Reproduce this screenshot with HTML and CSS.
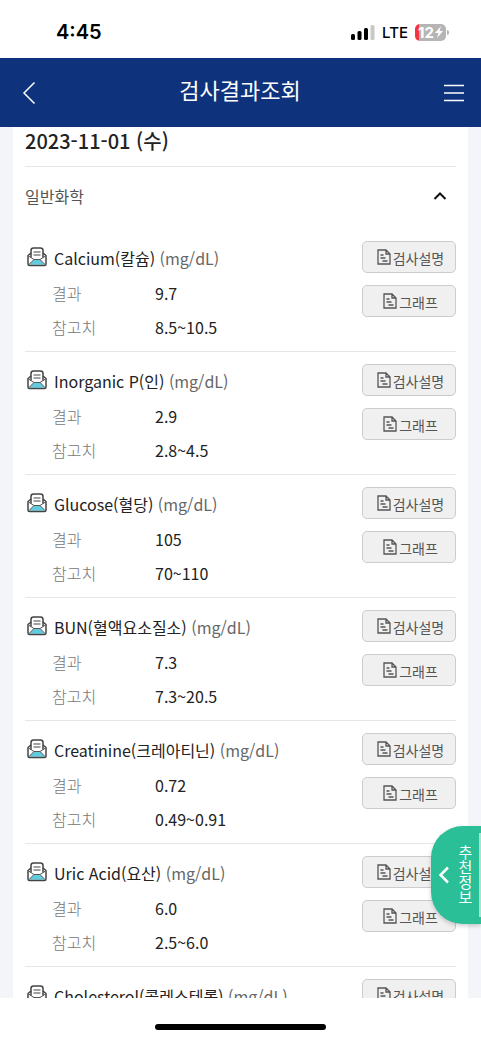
FILE: index.html
```html
<!DOCTYPE html>
<html lang="ko">
<head>
<meta charset="utf-8">
<meta name="viewport" content="width=device-width, initial-scale=1">
<title>검사결과조회</title>
<link rel="stylesheet" href="styles.css">
</head>
<body>
<svg class="defs" aria-hidden="true">
  <symbol id="mail" viewBox="0 0 20 20">
    <path d="M4 5.500 1 8.500V17q0 1.500 1.500 1.500h15Q19 18.500 19 17V8.500L16 5.500z" fill="#fff"/>
    <path d="M2 17.800 7 12.500h6l5 5.300z" fill="#62cbe0"/>
    <path d="M4 6 1 8.500V17q0 1.500 1.500 1.500h15Q19 18.500 19 17V8.500L16 6" fill="none" stroke="#444" stroke-width="1.500" stroke-linejoin="round"/>
    <path d="M1.500 9 7 12.500h6L18.500 9M7 12.500 2 17.500M13 12.500l5 5" fill="none" stroke="#555" stroke-width="1"/>
    <path d="M4 10.500V3.500Q4 1 6.500 1h7Q16 1 16 3.500v7" fill="none" stroke="#444" stroke-width="1.500"/>
    <path d="M6.500 5h7M6.500 8h7" stroke="#444" stroke-width="1.200"/>
  </symbol>
  <symbol id="doc" viewBox="0 0 14 16">
    <path d="M1 1h8l4 4v10H1zM9 1v4h4M3.500 6h3M3.500 9h5M5.500 12h5" fill="none" stroke="#555" stroke-width="1.300"/>
  </symbol>
</svg>
<div class="app">
  <div class="status">
    <span class="time">4:45</span>
    <div class="signals">
      <svg class="bars" viewBox="0 0 24 16" aria-hidden="true">
        <rect x="0" y="10" width="4" height="6" rx="1.500"/><rect x="6.500" y="7" width="4" height="9" rx="1.500"/><rect x="13" y="4" width="4" height="12" rx="1.500"/><rect x="19.500" y="1" width="4" height="15" rx="1.500" fill="#c8c8c8"/>
      </svg>
      <span class="network">LTE</span>
      <span class="battery"><span>12</span><svg viewBox="0 0 8 12" aria-hidden="true"><path d="M6 0 0 7h3.500L2 12l6-7H4.500z" fill="#fff"/></svg></span>
    </div>
  </div>
  <header class="topbar">
    <button class="nav" aria-label="뒤로"><svg width="14" height="24" viewBox="0 0 14 24"><path d="M12.500 1.500 2 12l10.500 10.500"/></svg></button>
    <h1>검사결과조회</h1>
    <button class="nav nav-menu" aria-label="메뉴"><svg width="20" height="18" viewBox="0 0 20 18"><path d="M0 1.500h20M0 9h20M0 16.500h20"/></svg></button>
  </header>
  <main class="content">
    <section class="card">
      <h2>2023-11-01 (수)</h2>
      <button class="category" aria-expanded="true"><span>일반화학</span><svg width="14" height="10" viewBox="0 0 14 10"><path d="M1.500 8 7 2.500 12.500 8"/></svg></button>
      <ul class="results">
        <li class="result">
          <div class="info"><h3><svg class="mail"><use href="#mail"/></svg><span>Calcium(칼슘) <small>(mg/dL)</small></span></h3>
          <dl><dt>결과</dt><dd>9.7</dd><dt>참고치</dt><dd>8.5~10.5</dd></dl></div>
          <div class="actions"><button><svg class="doc"><use href="#doc"/></svg><span>검사설명</span></button><button><svg class="doc"><use href="#doc"/></svg><span>그래프</span></button></div>
        </li>
        <li class="result">
          <div class="info"><h3><svg class="mail"><use href="#mail"/></svg><span>Inorganic P(인) <small>(mg/dL)</small></span></h3>
          <dl><dt>결과</dt><dd>2.9</dd><dt>참고치</dt><dd>2.8~4.5</dd></dl></div>
          <div class="actions"><button><svg class="doc"><use href="#doc"/></svg><span>검사설명</span></button><button><svg class="doc"><use href="#doc"/></svg><span>그래프</span></button></div>
        </li>
        <li class="result">
          <div class="info"><h3><svg class="mail"><use href="#mail"/></svg><span>Glucose(혈당) <small>(mg/dL)</small></span></h3>
          <dl><dt>결과</dt><dd>105</dd><dt>참고치</dt><dd>70~110</dd></dl></div>
          <div class="actions"><button><svg class="doc"><use href="#doc"/></svg><span>검사설명</span></button><button><svg class="doc"><use href="#doc"/></svg><span>그래프</span></button></div>
        </li>
        <li class="result">
          <div class="info"><h3><svg class="mail"><use href="#mail"/></svg><span>BUN(혈액요소질소) <small>(mg/dL)</small></span></h3>
          <dl><dt>결과</dt><dd>7.3</dd><dt>참고치</dt><dd>7.3~20.5</dd></dl></div>
          <div class="actions"><button><svg class="doc"><use href="#doc"/></svg><span>검사설명</span></button><button><svg class="doc"><use href="#doc"/></svg><span>그래프</span></button></div>
        </li>
        <li class="result">
          <div class="info"><h3><svg class="mail"><use href="#mail"/></svg><span>Creatinine(크레아티닌) <small>(mg/dL)</small></span></h3>
          <dl><dt>결과</dt><dd>0.72</dd><dt>참고치</dt><dd>0.49~0.91</dd></dl></div>
          <div class="actions"><button><svg class="doc"><use href="#doc"/></svg><span>검사설명</span></button><button><svg class="doc"><use href="#doc"/></svg><span>그래프</span></button></div>
        </li>
        <li class="result">
          <div class="info"><h3><svg class="mail"><use href="#mail"/></svg><span>Uric Acid(요산) <small>(mg/dL)</small></span></h3>
          <dl><dt>결과</dt><dd>6.0</dd><dt>참고치</dt><dd>2.5~6.0</dd></dl></div>
          <div class="actions"><button><svg class="doc"><use href="#doc"/></svg><span>검사설명</span></button><button><svg class="doc"><use href="#doc"/></svg><span>그래프</span></button></div>
        </li>
        <li class="result">
          <div class="info"><h3><svg class="mail"><use href="#mail"/></svg><span>Cholesterol(콜레스테롤) <small>(mg/dL)</small></span></h3></div>
          <div class="actions"><button><svg class="doc"><use href="#doc"/></svg><span>검사설명</span></button></div>
        </li>
      </ul>
    </section>
  </main>
  <button class="recommend"><svg width="10" height="18" viewBox="0 0 10 18" aria-hidden="true"><path d="M9 1.500 1.500 9 9 16.500"/></svg><span>추천정보</span></button>
  <div class="home"><span></span></div>
</div>
</body>
</html>
```
FILE: styles.css
```css
* { box-sizing: border-box; }
body {
  margin: 0;
  background: #fff;
  color: #222;
  font-family: "Noto Sans CJK KR", sans-serif;
  font-size: 16px;
}
h1, h2, h3, ul, dl, dd { margin: 0; padding: 0; font-weight: 400; }
button { font: inherit; color: inherit; border: 0; background: none; padding: 0; }
svg { display: block; flex: none; }
.defs { position: absolute; width: 0; height: 0; }

.app { position: relative; display: flex; flex-direction: column; height: 100vh; overflow: hidden; }

.status {
  flex: none;
  display: flex;
  align-items: center;
  justify-content: space-between;
  height: 58px;
  padding: 6px 35px 0 56px;
  color: #000;
  font-family: Inter, sans-serif;
}
.time { font-size: 20px; font-weight: 600; }
.signals { display: flex; align-items: center; gap: 7px; }
.bars { width: 24px; height: 16px; }
.network { font-size: 15px; font-weight: 500; }
.battery {
  position: relative;
  display: flex;
  align-items: center;
  justify-content: center;
  gap: 1px;
  width: 31px;
  height: 17px;
  border-radius: 5px;
  background: linear-gradient(90deg, #f4343f 4px, #b5b5b5 4px);
  color: #fff;
  font-size: 15px;
  font-weight: 700;
}
.battery svg { width: 8px; height: 12px; }
.battery::after {
  content: "";
  position: absolute;
  right: -3px;
  top: 6px;
  width: 2px;
  height: 5px;
  border-radius: 0 2px 2px 0;
  background: #b5b5b5;
}

.topbar {
  flex: none;
  display: flex;
  align-items: center;
  justify-content: space-between;
  height: 69px;
  padding: 0 17px 0 22px;
  background: #0f327c;
  color: #fff;
}
.topbar h1 { font-size: 22px; line-height: 32px; padding-bottom: 8px; }
.nav svg { fill: none; stroke: #fff; stroke-width: 1.5; }

.content { flex: 1; min-height: 0; overflow: hidden; padding: 0 13px; background: #f4f5f8; }
.card { background: #fff; padding: 0 12px; }
.card h2 {
  height: 40px;
  border-bottom: 1px solid #e6e6e6;
  font-size: 20px;
  font-weight: 500;
  line-height: 28px;
}
.category {
  display: flex;
  align-items: center;
  justify-content: space-between;
  width: 100%;
  height: 62px;
  padding: 0 9px 5px 0;
  color: #555;
}
.category svg { fill: none; stroke: #111; stroke-width: 2; }

.results { list-style: none; }
.result {
  display: flex;
  justify-content: space-between;
  padding: 12px 0 7px;
  border-bottom: 1px solid #e6e6e6;
}
.info { flex: 1; line-height: 34px; }
.info h3 { display: flex; gap: 7px; padding-left: 2px; font-size: 16px; white-space: nowrap; line-height: 35px; }
.info small { font-size: 16px; color: #666; }
.mail { width: 20px; height: 20px; margin-top: 6px; }
.info dl { display: grid; grid-template-columns: 103px 1fr; padding-left: 27px; }
.info dt { color: #777; font-weight: 300; }

.actions { display: flex; flex-direction: column; gap: 12px; width: 94px; }
.actions button {
  display: flex;
  align-items: center;
  justify-content: center;
  gap: 2px;
  height: 32px;
  padding-left: 3px;
  border: 1px solid #ccc;
  border-radius: 5px;
  background: #f0f0f0;
  color: #555;
  font-size: 14px;
}
.actions span { padding-top: 2px; }
.doc { width: 14px; height: 16px; }

.recommend {
  position: absolute;
  right: 0;
  bottom: 116px;
  display: flex;
  align-items: center;
  gap: 8px;
  width: 50px;
  height: 98px;
  padding-left: 8px;
  border-radius: 32px 0 0 32px;
  background: #2abf96;
  color: #fff;
  box-shadow: 0 2px 4px rgba(0, 0, 0, 0.2);
  font-size: 15px;
}
.recommend::after {
  content: "";
  position: absolute;
  right: 0;
  top: 7px;
  bottom: 7px;
  width: 2px;
  background: #a5e4d1;
}
.recommend span { writing-mode: vertical-rl; line-height: 16px; }
.recommend svg { fill: none; stroke: #fff; stroke-width: 2.5; }

.home { flex: none; display: flex; justify-content: center; height: 42px; padding-top: 26px; background: #fff; }
.home span { width: 171px; height: 6px; border-radius: 3px; background: #000; }
```
